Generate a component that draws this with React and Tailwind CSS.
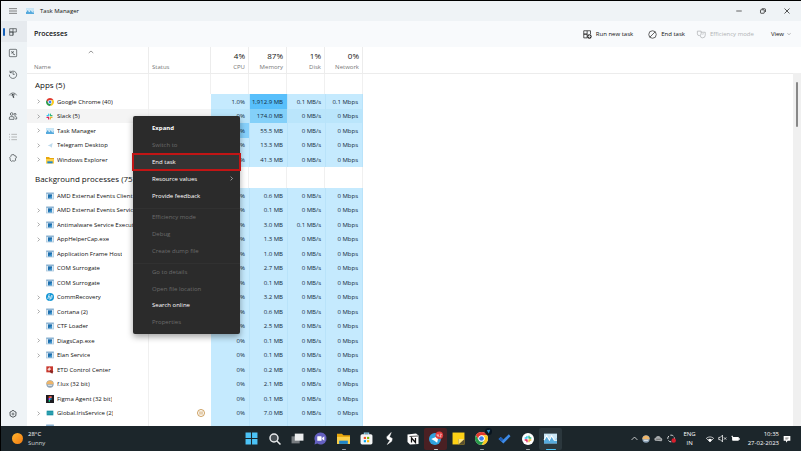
import React from "react";

const box = "shrink-0 overflow-visible";

function Svg({ w = 9, h, vb = "0 0 24 24", children, cls = "" }) {
  return (
    <svg width={w} height={h || w} viewBox={vb} fill="none" className={`${box} ${cls}`} aria-hidden="true">
      {children}
    </svg>
  );
}

function ChromeIcon({ size = 9 }) {
  return (
    <Svg w={size}>
      <circle cx="12" cy="12" r="12" fill="#fff" />
      <path d="M12 0a12 12 0 0 1 10.4 6H12a6 6 0 0 0-5.2 9L1.6 6A12 12 0 0 1 12 0z" fill="#e0392d" />
      <path d="M22.4 6A12 12 0 0 1 12 24l5.2-9A6 6 0 0 0 12 6z" fill="#fcc91f" />
      <path d="M12 24A12 12 0 0 1 1.6 6l5.2 9A6 6 0 0 0 17.2 15z" fill="#2a9c4a" />
      <circle cx="12" cy="12" r="5.4" fill="#fff" />
      <circle cx="12" cy="12" r="4.3" fill="#3b7ded" />
    </Svg>
  );
}

function SlackIcon({ size = 9 }) {
  return (
    <Svg w={size}>
      <g strokeWidth="4" strokeLinecap="round">
        <path d="M9 4v5M3.500 9H9" stroke="#36c5f0" />
        <path d="M15 9V3.500M15 9h5.500" stroke="#2eb67d" />
        <path d="M15 15h5.500M15 15v5.500" stroke="#ecb22e" />
        <path d="M9 15v5.500M9 15H3.500" stroke="#e01e5a" />
      </g>
    </Svg>
  );
}

function TaskIcon({ size = 9 }) {
  return (
    <Svg w={size}>
      <rect x="0" y="3" width="24" height="18" fill="#c9e6f6" />
      <path d="M0 21v-6l5-8 5 6 4-6 5 7 5-2v9z" fill="#56aadd" />
      <path d="M0 15l5-8 5 8 4-8 5 8h5" stroke="#fff" strokeWidth="2" />
    </Svg>
  );
}

function FolderIcon({ size = 9 }) {
  return (
    <Svg w={size}>
      <path d="M0 3h9l3 3h12v16H0z" fill="#e8a60c" />
      <path d="M0 9h24v13H0z" fill="#fcd04a" />
      <path d="M4 22v-6h16v6z" fill="#1f86c9" />
    </Svg>
  );
}

function ExeIcon() {
  return (
    <Svg w={8}>
      <rect x="1" y="3" width="22" height="18" fill="#dceaf4" stroke="#a5c3da" strokeWidth="2" />
      <rect x="1" y="2" width="22" height="4" fill="#8db4d3" />
      <rect x="6" y="7" width="12" height="12" fill="#1e6fae" />
      <path d="M6 19l12-8v8z" fill="#3f95cf" />
    </Svg>
  );
}

function SunIcon({ size = 9 }) {
  return (
    <Svg w={size}>
      <circle cx="12" cy="12" r="11" fill="#8ea4b8" />
      <path d="M1.500 9a11 11 0 0 1 21 0v4h-21z" fill="#eeb569" />
      <path d="M4 14h16l-3 4H7z" fill="#d5dde5" />
    </Svg>
  );
}

function RowIcon({ kind }) {
  switch (kind) {
    case "chrome":
      return <ChromeIcon size={8} />;
    case "slack":
      return <SlackIcon size={7} />;
    case "task":
      return <TaskIcon size={8} />;
    case "folder":
      return <FolderIcon size={8} />;
    case "telegram":
      return (
        <Svg w={8}>
          <path d="M5 14L20 6l-3 14-5-4z" fill="#bcd9ec" />
        </Svg>
      );
    case "hp":
      return (
        <Svg w={8}>
          <circle cx="12" cy="12" r="12" fill="#1497d6" />
          <path d="M10 3L5 18M7 10h4l-2 7M16 8l-5 14M15 8h4l-2 8h-4" stroke="#fff" strokeWidth="2" />
        </Svg>
      );
    case "etd":
      return (
        <Svg w={8}>
          <rect x="1" y="1" width="20" height="18" fill="#c8392f" />
          <path d="M4 10l7-6 4 6-6 5z" fill="#f3d9d6" />
          <path d="M13 12l9 4-3 7-8-5z" fill="#8b2722" />
        </Svg>
      );
    case "flux":
      return <SunIcon size={8} />;
    case "figma":
      return (
        <Svg w={8}>
          <rect width="24" height="24" fill="#1e1c22" />
          <path d="M8 4h4v5H8z" fill="#f24e1e" />
          <path d="M12 4h5v5h-5z" fill="#ff7262" />
          <path d="M8 9h4v6H8z" fill="#a259ff" />
          <circle cx="14.500" cy="12" r="2.500" fill="#1abcfe" />
          <path d="M8 15h4v5H8z" fill="#0acf83" />
        </Svg>
      );
    case "iris":
      return (
        <Svg w={8}>
          <rect x="2" y="5" width="20" height="14" fill="#1c93a5" />
          <path d="M2 12h20" stroke="#4fb9c4" strokeWidth="2" />
        </Svg>
      );
    default:
      return <ExeIcon />;
  }
}

const apps = [
  { name: "Google Chrome (40)", icon: "chrome", open: true, cpu: "1.0%", mem: "1,912.9 MB", disk: "0.1 MB/s", net: "0.1 Mbps", memTone: "bg-[#58bffb]" },
  { name: "Slack (5)", icon: "slack", open: true, cpu: "0%", mem: "174.0 MB", disk: "0 MB/s", net: "0 Mbps", memTone: "bg-[#83d0f9]", selected: true },
  { name: "Task Manager", icon: "task", open: true, cpu: "1.7%", mem: "55.5 MB", disk: "0 MB/s", net: "0 Mbps", cpuTone: "bg-[#86d0fb]" },
  { name: "Telegram Desktop", icon: "telegram", open: true, cpu: "0%", mem: "13.3 MB", disk: "0 MB/s", net: "0 Mbps" },
  { name: "Windows Explorer", icon: "folder", open: true, cpu: "0%", mem: "41.3 MB", disk: "0 MB/s", net: "0 Mbps" },
];

const background = [
  ["AMD External Events Client", "exe", false, "0.6 MB"],
  ["AMD External Events Service", "exe", true, "0.1 MB"],
  ["Antimalware Service Execut...", "exe", true, "3.0 MB", "0.1 MB/s"],
  ["AppHelperCap.exe", "exe", true, "1.3 MB"],
  ["Application Frame Host", "exe", false, "1.0 MB"],
  ["COM Surrogate", "exe", false, "2.7 MB"],
  ["COM Surrogate", "exe", false, "0.1 MB"],
  ["CommRecovery", "hp", true, "3.2 MB"],
  ["Cortana (2)", "exe", true, "0.6 MB"],
  ["CTF Loader", "exe", false, "2.5 MB"],
  ["DiagsCap.exe", "exe", true, "0.1 MB"],
  ["Elan Service", "exe", true, "0.1 MB"],
  ["ETD Control Center", "etd", false, "0.2 MB"],
  ["f.lux (32 bit)", "flux", false, "2.1 MB"],
  ["Figma Agent (32 bit)", "figma", false, "0.1 MB"],
  ["Global.IrisService (2)", "iris", true, "7.0 MB"],
  ["", "exe", false, ""],
].map(([name, icon, open, mem, disk = "0 MB/s"]) => ({
  name, icon, open, mem,
  cpu: name ? "0%" : "",
  disk: name ? disk : "",
  net: name ? "0 Mbps" : "",
  paused: name.startsWith("Global"),
}));

function Chevron({ cls = "" }) {
  return (
    <Svg w={5} cls={cls}>
      <path d="M8 3l9 9-9 9" stroke="currentColor" strokeWidth="3" />
    </Svg>
  );
}

function Row({ p }) {
  const base = p.selected ? "bg-[#bae5fb]" : "bg-[#c5eafe]";
  const hover = p.selected ? "bg-[#f4f4f4]" : "";
  const num = "p-0 pr-1 text-right text-[#12293a]";
  return (
    <tr className="h-[15px] leading-3 even:h-[14px]">
      <th scope="row" className={`border-r border-[#f0f0f0] p-0 text-left font-normal ${hover}`}>
        <div className="flex items-center overflow-hidden pl-[9px]">
          <span className="flex w-[10px] shrink-0 items-center text-[#777]">{p.open && <Chevron />}</span>
          <span className="flex w-[11px] shrink-0 items-center"><RowIcon kind={p.icon} /></span>
          <span className="truncate">{p.name}</span>
        </div>
      </th>
      <td className={`p-0 ${hover}`}>
        {p.paused && (
          <Svg w={8} cls="mr-[6px] ml-auto block">
            <circle cx="12" cy="12" r="10.500" stroke="#c08a3c" strokeWidth="2.500" />
            <path d="M9 7v10M15 7v10" stroke="#c08a3c" strokeWidth="2.500" />
          </Svg>
        )}
      </td>
      <td className={`${num} ${p.cpuTone || base}`}>{p.cpu}</td>
      <td className={`${num} border-l border-[#b9e3fa] ${p.memTone || base}`}>{p.mem}</td>
      <td className={`${num} border-l border-[#b9e3fa] ${base}`}>{p.disk}</td>
      <td className={`${num} border-x border-[#b9e3fa] ${base}`}>{p.net}</td>
      <td className="p-0" />
    </tr>
  );
}

function GroupRow({ label, height }) {
  const cell = "border-r border-[#f0f0f0] p-0";
  return (
    <tr className={height}>
      <th scope="rowgroup" className={`${cell} pb-[3px] pl-2 text-left align-bottom text-[8px] leading-3 font-normal`}>{label}</th>
      <td className={cell} /><td className={cell} /><td className={cell} /><td className={cell} /><td className={cell} />
      <td className="p-0" />
    </tr>
  );
}

function HeadCell({ total, label }) {
  return (
    <th scope="col" className="border-r border-[#ececec] p-0 pr-[3px] text-right align-bottom font-normal">
      <div className="text-[8px] leading-3">{total}</div>
      <div className="pb-px leading-[10px] text-[#777]">{label}</div>
    </th>
  );
}

function ProcessTable() {
  return (
    <table className="w-full table-fixed border-separate border-spacing-0 bg-white text-[6px] whitespace-nowrap">
      <colgroup>
        <col className="w-[122px]" />
        <col className="w-[62px]" />
        <col className="w-[38px]" />
        <col className="w-[38px]" />
        <col className="w-[38px]" />
        <col className="w-[38px]" />
        <col />
      </colgroup>
      <thead>
        <tr className="h-[27px] [&>th]:border-b">
          <th scope="col" className="border-r border-[#ececec] p-0 pl-[7px] text-left align-bottom font-normal text-[#777]">
            <Svg w={6} cls="mx-auto mb-[7px] block">
              <path d="M3 16l9-8 9 8" stroke="#777" strokeWidth="3" />
            </Svg>
            <div className="pb-px leading-[10px]">Name</div>
          </th>
          <th scope="col" className="border-r border-[#ececec] p-0 pb-px pl-[3px] text-left align-bottom leading-[10px] font-normal text-[#777]">Status</th>
          <HeadCell total="4%" label="CPU" />
          <HeadCell total="87%" label="Memory" />
          <HeadCell total="1%" label="Disk" />
          <HeadCell total="0%" label="Network" />
          <td className="border-b border-[#ececec] p-0" />
        </tr>
      </thead>
      <tbody><GroupRow label="Apps (5)" height="h-[20px]" /></tbody>
      <tbody>{apps.map((p) => <Row key={p.name} p={p} />)}</tbody>
      <tbody><GroupRow label="Background processes (75)" height="h-[21px]" /></tbody>
      <tbody>{background.map((p, i) => <Row key={i} p={p} />)}</tbody>
    </table>
  );
}

const sideIcons = [
  ["Processes", <path key="a" d="M2 2h20v10H2zM2 12h10v10H2zM12 2v20" />],
  ["Performance", <g key="b"><rect x="1" y="1" width="22" height="22" rx="2" /><path d="M6 8l5 1 2 7 5 1M7 13l8-6" /></g>],
  ["App history", <path key="c" d="M3 2v6h6M3 8a11 11 0 1 1-2 6M12 6v7h5" />],
  ["Startup apps", <g key="d"><path d="M1 13a12 12 0 0 1 22 0M6 14a7 7 0 0 1 12-1" /><path d="M10 9l3 11 2-1z" fill="#3a3f43" /></g>],
  ["Users", <g key="e"><circle cx="8" cy="6" r="4" /><circle cx="18" cy="7" r="3" /><path d="M1 22v-4q0-4 3-4h8q3 0 3 4v4zM17 14h3q3 0 3 3v4h-5" /></g>],
  ["Details", <path key="f" stroke="#999" d="M0 4h3M7 4h17M0 12h3M7 12h17M0 20h3M7 20h17" />],
  ["Services", <path key="g" d="M9 2h6l1 3 5 1 1 6-3 2 1 5-5 3-3-2-5 2-4-4 1-3-2-4 3-3 1-4z" />],
];

const menuGroups = [
  { size: "h-[84px]", items: [["Expand", true, "font-bold"], ["Switch to", false], ["End task", true, "", "end"], ["Resource values", true, "", "more"], ["Provide feedback", true]] },
  { size: "h-[51px]", items: [["Efficiency mode", false], ["Debug", false], ["Create dump file", false]] },
  { size: "h-[67px]", items: [["Go to details", false], ["Open file location", false], ["Search online", true], ["Properties", false]] },
];

function ContextMenu() {
  return (
    <div role="menu" className="absolute top-[115px] left-[132px] w-[107px] rounded-[2px] bg-[#2b2b2b] py-1 text-[6px] leading-3 shadow-[0_3px_6px_rgba(0,0,0,0.35)]">
      {menuGroups.map((g, i) => (
        <div key={i} role="group" className={`flex flex-col ${g.size} ${i ? "mt-1 border-t border-[#313131]" : ""}`}>
          {g.items.map(([label, enabled, weight = "", extra]) => (
            <button
              key={label}
              role="menuitem"
              disabled={!enabled}
              className={`flex flex-1 items-center justify-between pr-1.5 pl-[19px] text-left ${weight} ${enabled ? "text-white" : "text-[#6c6c6c]"} ${extra === "end" ? "bg-[#343434] outline-2 -outline-offset-1 outline-[#c11515]" : ""}`}
            >
              {label}
              {extra === "more" && <Chevron cls="text-[#ddd]" />}
            </button>
          ))}
        </div>
      ))}
    </div>
  );
}

const dock = [
  ["Start", <Svg w={13} key="i"><path d="M1 1h10v10H1zM13 1h10v10H13zM1 13h10v10H1zM13 13h10v10H13z" fill="#4cc2f5" /></Svg>],
  ["Search", <Svg w={12} key="i"><circle cx="10" cy="10" r="8" stroke="#e8eaec" strokeWidth="3" fill="#4a5156" /><path d="M16 16l7 7" stroke="#e8eaec" strokeWidth="3" /></Svg>],
  ["Task view", <Svg w={13} key="i"><rect x="1" y="8" width="15" height="13" fill="#777c80" /><rect x="7" y="3" width="16" height="13" fill="#eceeef" /></Svg>],
  ["Chat", <Svg w={13} key="i"><path d="M12 1a11 11 0 1 1-6 20l-5 2 1-6A11 11 0 0 1 12 1z" fill="#6460c0" /><rect x="6" y="8" width="8" height="8" rx="1" fill="#fff" /><path d="M15 11l4-3v8l-4-3z" fill="#fff" /></Svg>],
  ["File Explorer", <FolderIcon key="i" size={13} />, "dot"],
  ["Microsoft Store", <Svg w={13} key="i"><path d="M8 5V2h8v3" stroke="#8ccbe8" strokeWidth="2" /><rect x="1" y="4" width="22" height="19" rx="3" fill="#f3f5f6" /><path d="M7 9h4v4H7z" fill="#f25022" /><path d="M13 9h4v4h-4z" fill="#7fba00" /><path d="M7 15h4v4H7z" fill="#00a4ef" /><path d="M13 15h4v4h-4z" fill="#ffb900" /></Svg>],
  ["Shortcuts", <Svg w={13} key="i"><path d="M15 1l-8 8 1 4 5 2-5 8 8-6 1-5-5-3z" fill="#fff" stroke="#fff" strokeWidth="1" /></Svg>],
  ["Notion", <Svg w={12} key="i"><path d="M1 3l17-2 5 4v17l-17 1-5-5z" fill="#fff" /><path d="M5 7l17-1" stroke="#222" strokeWidth="1.500" /><path d="M9 19V10l8 9v-9" stroke="#111" strokeWidth="2.500" /></Svg>],
  ["Telegram", <Svg w={13} key="i"><circle cx="11" cy="13" r="11" fill="#2fa3df" /><path d="M4 13l14-6-3 13-5-4z" fill="#fff" /><circle cx="19" cy="6" r="7" fill="#e23b3b" /><path d="M15 4v3h3M17 4v5M20 4h3l-3 5h3" stroke="#fff" strokeWidth="1" /></Svg>, "alert"],
  ["Sticky Notes", <Svg w={13} key="i"><path d="M1 1h22v22H1z" fill="#fcd116" /><path d="M12 13h11v10H12z" fill="#5a5030" /><path d="M12 23V13h11z" fill="#fbe27a" /></Svg>],
  ["Google Chrome", <span key="i" className="relative flex"><ChromeIcon size={13} /><Svg w={7} cls="absolute -top-1 -right-1"><circle cx="12" cy="12" r="12" fill="#07131f" /><path d="M6 8l12-2-5 13z" fill="#2c8fc7" /></Svg></span>, "dot"],
  ["To Do", <Svg w={13} key="i"><path d="M1 13l4-4 5 5L20 4l3 4-13 13z" fill="#3d8be8" /><path d="M1 13l4-4 5 5-3 4z" fill="#1f5fb8" /></Svg>],
  ["Slack", <span key="i" className="flex size-3 items-center justify-center rounded-full bg-white"><SlackIcon size={8} /></span>, "dot"],
  ["Task Manager", <TaskIcon key="i" size={13} />, "active"],
];

const marks = {
  dot: "after:w-1 after:bg-[#9aa1a5]",
  alert: "bg-[#4a2023] after:w-1 after:bg-[#c9cdd0]",
  active: "bg-[#2b373d] after:w-2.5 after:bg-[#4cc2f5]",
};

function Taskbar() {
  return (
    <footer className="grid h-[25px] shrink-0 grid-cols-[1fr_auto_1fr] items-center bg-[#1c262b] text-[6px] leading-[9px] text-white">
      <div className="flex items-center gap-[5px] pl-[11px]">
        <span className="size-[11px] rounded-full bg-linear-to-br from-[#ffb52c] to-[#f27a12]" />
        <div><div>28°C</div><div className="text-[#d0d4d6]">Sunny</div></div>
      </div>
      <nav className="flex">
        {dock.map(([label, icon, mark]) => (
          <button
            key={label}
            aria-label={label}
            className={`relative flex h-[22px] w-[23px] items-center justify-center rounded-[2px] after:absolute after:bottom-0 after:h-px after:rounded-full ${marks[mark] || ""}`}
          >
            {icon}
          </button>
        ))}
      </nav>
      <div className="flex items-center justify-end gap-1 pr-[10px]">
        <Svg w={7}><path d="M2 17l10-10 10 10" stroke="#fff" strokeWidth="2.500" /></Svg>
        <SunIcon size={8} />
        <Svg w={9}><path d="M3 18a5 5 0 0 1 2-9 7 7 0 0 1 13 1 5 5 0 0 1 2 9z" fill="#a7abad" /><path d="M6 14h12" stroke="#555" strokeWidth="2" /></Svg>
        <Svg w={9}><circle cx="11" cy="12" r="9" stroke="#e5e7e8" strokeWidth="2.500" strokeDasharray="9 4" /><circle cx="18" cy="17" r="6" fill="#d81e2c" /></Svg>
        <div className="mr-1.5 ml-[3px] text-center"><div>ENG</div><div>IN</div></div>
        <Svg w={8}><path d="M1 10a16 16 0 0 1 22 0L12 21z" stroke="#fff" strokeWidth="2" /><path d="M6 14a9 9 0 0 1 12 0l-6 7z" fill="#fff" /></Svg>
        <Svg w={9}><path d="M2 9h4l6-6v18l-6-6H2zM16 9l6 6M22 9l-6 6" stroke="#fff" strokeWidth="2" /></Svg>
        <Svg w={9}><rect x="3" y="8" width="18" height="10" rx="2" fill="#fff" /><path d="M22 11v4M2 5l5 7" stroke="#fff" strokeWidth="3" /></Svg>
        <div className="ml-1 text-right"><div>10:35</div><div>27-02-2023</div></div>
        <Svg w={8}><path d="M2 3h20v14h-8l-5 6v-6H2z" fill="#fff" /><path d="M7 9h10M7 12h7" stroke="#555" strokeWidth="2" /></Svg>
      </div>
    </footer>
  );
}

export default function App() {
  return (
    <div className="relative flex h-screen flex-col overflow-hidden border-t border-l border-black bg-[#eef3f6] font-['Open_Sans','Noto_Sans',sans-serif] text-[6px] text-[#111]">
      <header className="flex h-[20px] shrink-0 items-center bg-[#eff3f6]">
        <button aria-label="Menu" className="flex w-6 justify-center">
          <Svg w={8}><path d="M0 5h24M0 12h24M0 19h24" stroke="#444" strokeWidth="2" /></Svg>
        </button>
        <span className="flex pl-px"><TaskIcon size={8} /></span>
        <h1 className="ml-1.5 flex-1">Task Manager</h1>
        <button aria-label="Minimize" className="flex w-6 justify-center"><Svg w={6}><path d="M1 12h22" stroke="#333" strokeWidth="3" /></Svg></button>
        <button aria-label="Restore" className="flex w-6 justify-center"><Svg w={6}><rect x="2" y="7" width="15" height="14" rx="2" stroke="#222" strokeWidth="3" /><path d="M7 3h12q3 0 3 3v10" stroke="#222" strokeWidth="3" /></Svg></button>
        <button aria-label="Close" className="mr-0.5 flex w-6 justify-center"><Svg w={6}><path d="M2 2l20 20M22 2L2 22" stroke="#222" strokeWidth="3" /></Svg></button>
      </header>

      <div className="flex min-h-0 flex-1">
        <nav className="flex w-[26px] shrink-0 flex-col">
          {sideIcons.map(([label, art], i) => (
            <button
              key={label}
              aria-label={label}
              className={`flex h-[21px] shrink-0 items-center justify-center pr-0.5 ${i === 0 ? "relative bg-[#e6eaee] before:absolute before:left-[2px] before:h-2 before:w-[2px] before:rounded-full before:bg-[#1560b8]" : ""}`}
            >
              <Svg w={8}><g stroke="#3a3f43" strokeWidth="2">{art}</g></Svg>
            </button>
          ))}
          <button aria-label="Settings" className="mt-auto flex h-6 items-center justify-center pr-0.5">
            <Svg w={8}><path d="M9 2h6l2 3 4 1v6l-1 6-5 2-3 2-3-2-5-2-1-6V6l4-1z" stroke="#3a3f43" strokeWidth="2.500" /><circle cx="12" cy="12" r="3" stroke="#3a3f43" strokeWidth="2" /></Svg>
          </button>
        </nav>

        <main className="flex min-w-0 flex-1 flex-col">
          <div className="flex h-[26px] shrink-0 items-center bg-[#f8fafc] pr-[10px] pl-[7px]">
            <h2 className="flex-1 text-[7px] font-semibold">Processes</h2>
            <button className="mr-[15px] flex items-center gap-1">
              <Svg w={9}><path d="M2 2h9v9H2zM2 11h9v10H2zM11 2h9v9" stroke="#222" strokeWidth="2" /><circle cx="17" cy="17" r="6" fill="#222" /><path d="M17 13v8M13 17h8" stroke="#fff" strokeWidth="2" /></Svg>
              Run new task
            </button>
            <button className="mr-3 flex items-center gap-1">
              <Svg w={9}><circle cx="12" cy="12" r="10" stroke="#333" strokeWidth="2" /><path d="M5 19L19 5" stroke="#333" strokeWidth="2" /></Svg>
              End task
            </button>
            <button disabled className="mr-[17px] flex items-center gap-1 text-[#b0b3b5]">
              <Svg w={9}><path d="M1 3h10v7q0 5-5 5t-5-5zM11 6h11v8q0 7-8 7-5 0-5-6M14 11l4-1" stroke="#b0b3b5" strokeWidth="2" /></Svg>
              Efficiency mode
            </button>
            <button className="flex items-center gap-[3px]">
              View
              <Svg w={4}><path d="M2 8l10 8 10-8" stroke="#777" strokeWidth="3" /></Svg>
            </button>
          </div>
          <div className="flex min-h-0 flex-1 bg-white">
            <div className="min-w-0 flex-1 overflow-hidden"><ProcessTable /></div>
            <div className="mt-[26px] w-2 shrink-0 bg-[#f0f0f0] pt-[9px]">
              <div className="ml-[3px] h-[45px] w-[2px] rounded-full bg-[#888]" />
            </div>
          </div>
        </main>
      </div>
      <Taskbar />
      <ContextMenu />
    </div>
  );
}
